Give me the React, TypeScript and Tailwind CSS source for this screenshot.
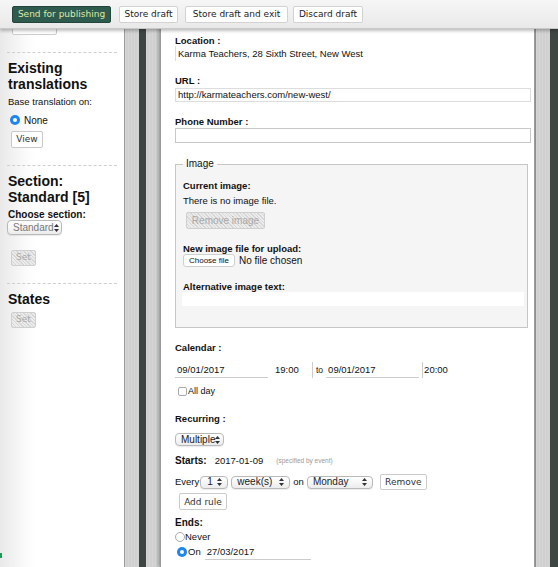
import React from 'react'

const sans = "font-['Liberation_Sans',Arial,sans-serif]"
const btnFont = "font-['DejaVu_Sans',Verdana,sans-serif] text-[9px]"
const hatch =
  'bg-[repeating-linear-gradient(45deg,#d6d6d6_0px,#d6d6d6_1px,#ececec_1px,#ececec_2.5px)] text-[#a9a9a9] border border-[#cfcfcf] rounded-[2px]'
const texture =
  'bg-[#d0d0d0] bg-[repeating-linear-gradient(90deg,rgba(255,255,255,0.12)_0px,rgba(255,255,255,0.12)_1px,transparent_1px,transparent_3px)]'

function Arrows() {
  return (
    <svg width="5" height="8" viewBox="0 0 5 8" className="shrink-0">
      <path d="M2.5 0 L5 3 L0 3 Z M2.5 8 L5 5 L0 5 Z" fill="#333" />
    </svg>
  )
}

function Select({ label, className = '', muted = false }: { label: string; className?: string; muted?: boolean }) {
  return (
    <div
      className={`flex items-center justify-between rounded-[4px] border border-[#b9b9b9] bg-[linear-gradient(#fff,#ececec)] px-[5px] text-[10px] shadow-[0_1px_1px_rgba(0,0,0,0.08)] ${
        muted ? 'text-[#777]' : 'text-[#222]'
      } ${className}`}
    >
      <span>{label}</span>
      <Arrows />
    </div>
  )
}

function Radio({ checked }: { checked?: boolean }) {
  return checked ? (
    <span className="flex h-[10px] w-[10px] shrink-0 items-center justify-center rounded-full bg-[#1d86f2]">
      <span className="h-[4px] w-[4px] rounded-full bg-white" />
    </span>
  ) : (
    <span className="h-[10px] w-[10px] shrink-0 rounded-full border border-[#aaa] bg-white" />
  )
}

function Dashed({ top }: { top: string }) {
  return <div className={`${top} mx-[7px] border-t border-dashed border-[#cfcfcf]`} />
}

function Toolbar() {
  return (
    <div className="absolute left-0 right-0 top-0 flex h-[29px] items-start border-b border-[#c8c8c8] bg-[linear-gradient(#f6f6f6,#e9e9e9)] pl-[12px] pt-[6px] shadow-[0_2px_3px_rgba(0,0,0,0.25)]">
      <button className={`${btnFont} h-[17px] w-[99px] rounded-[2px] border border-[#23463c] bg-[#2f5b4f] text-[#dfeaa6]`}>
        Send for publishing
      </button>
      <button className={`${btnFont} ml-[8px] h-[17px] w-[59px] rounded-[2px] border border-[#d2d2d2] bg-white text-[#222]`}>
        Store draft
      </button>
      <button className={`${btnFont} ml-[7px] h-[17px] w-[103px] rounded-[2px] border border-[#d2d2d2] bg-white text-[#222]`}>
        Store draft and exit
      </button>
      <button className={`${btnFont} ml-[5px] h-[17px] w-[70px] rounded-[2px] border border-[#d2d2d2] bg-white text-[#222]`}>
        Discard draft
      </button>
    </div>
  )
}

function Sidebar() {
  return (
    <aside className="flex w-[125px] shrink-0 flex-col border-r border-[#9c9c9c] bg-[linear-gradient(90deg,#e9e9e9_0px,#fafafa_25px,#fff_35px)] pt-[17px] text-[#111]">
      <button className={`${btnFont} ml-[12px] h-[18px] w-[45px] rounded-[2px] border border-[#ccc] bg-white text-[#999]`}>
        Preview
      </button>
      <Dashed top="mt-[17px]" />
      <h3 className="ml-[8px] mt-[7px] text-[14px] font-bold leading-[16px]">
        Existing
        <br />
        translations
      </h3>
      <p className="ml-[8px] mt-[4px] text-[9.5px] leading-[12px]">Base translation on:</p>
      <div className="ml-[10px] mt-[6px] flex h-[12px] items-center gap-[4px] text-[10px]">
        <Radio checked />
        <span>None</span>
      </div>
      <button className={`${btnFont} ml-[11px] mt-[5px] h-[17px] w-[32px] rounded-[2px] border border-[#c9c9c9] bg-white text-[#333]`}>
        View
      </button>
      <Dashed top="mt-[17px]" />
      <h3 className="ml-[8px] mt-[7px] text-[14px] font-bold leading-[16px]">
        Section:
        <br />
        Standard [5]
      </h3>
      <p className="ml-[8px] mt-[4px] text-[10px] font-bold leading-[12px]">Choose section:</p>
      <Select label="Standard" muted className="ml-[7px] mt-[-1px] h-[15px] w-[55px]" />
      <button className={`${btnFont} ${hatch} ml-[11px] mt-[15px] h-[16px] w-[25px]`}>Set</button>
      <Dashed top="mt-[17px]" />
      <h3 className="ml-[8px] mt-[7px] text-[14px] font-bold leading-[16px]">States</h3>
      <button className={`${btnFont} ${hatch} ml-[11px] mt-[5px] h-[16px] w-[25px]`}>Set</button>
      <div className="mb-[9px] mt-auto h-[5px] w-[2px] bg-[#1f9a55]" />
    </aside>
  )
}

function Label({ children, className = '' }: { children: React.ReactNode; className?: string }) {
  return <div className={`text-[9.5px] font-bold leading-[12px] text-[#111] ${className}`}>{children}</div>
}

function MainForm() {
  return (
    <main className="w-[375px] shrink-0 border-x border-[#9a9a9a] bg-white pl-[14px] pr-[3px] pt-[35px] text-[9.5px] leading-[12px] text-[#111] shadow-[-2px_0_3px_rgba(0,0,0,0.25)]">
      <Label className="h-[11px]">Location :</Label>
      <div className="flex h-[15px] items-center border-l border-[#ddd] pl-[2px]">
        Karma Teachers, 28 Sixth Street, New West
      </div>

      <Label className="mt-[14px]">URL :</Label>
      <div className="mt-[1px] flex h-[14px] items-center border border-[#ddd] pl-[2px]">
        http://karmateachers.com/new-west/
      </div>

      <Label className="mt-[14px]">Phone Number :</Label>
      <div className="h-[15px] border border-[#c8c8c8]" />

      <fieldset className="mr-[3px] mt-[15px] border border-[#c6c6c6] bg-[#f5f5f5] pb-[21px] pl-[7px] pr-[3px]">
        <legend className="px-[3px] text-[10px] font-medium leading-[12px]">Image</legend>
        <Label className="mt-[10px]">Current image:</Label>
        <p className="mt-[3px]">There is no image file.</p>
        <button className={`${sans} ${hatch} ml-[3px] mt-[5px] block h-[17px] w-[79px] text-[10px]`}>Remove image</button>
        <Label className="mt-[14px] h-[11px]">New image file for upload:</Label>
        <div className="flex h-[13px] items-center">
          <span className={`${sans} flex h-[13px] w-[52px] items-center justify-center rounded-[3px] border border-[#d0d0d0] bg-white text-[8px]`}>
            Choose file
          </span>
          <span className="ml-[4px] text-[10px]">No file chosen</span>
        </div>
        <Label className="mt-[14px] h-[11px]">Alternative image text:</Label>
        <div className="ml-[-1px] h-[14px] bg-white" />
      </fieldset>

      <Label className="mt-[14px]">Calendar :</Label>
      <div className="mt-[8px] flex h-[16px] items-stretch">
        <span className="flex w-[93px] items-center border-b border-[#ccc] pl-[2px]">09/01/2017</span>
        <span className="flex w-[44px] items-center pl-[7px]">19:00</span>
        <span className="flex items-center border-l border-[#ccc] pl-[3px] pr-[3px] text-[8.5px]">to</span>
        <span className="flex w-[93px] items-center border-b border-[#ccc] pl-[2px]">09/01/2017</span>
        <span className="ml-[3px] flex items-center border-l border-[#ccc] pl-[1px]">20:00</span>
      </div>
      <div className="ml-[3px] mt-[7px] flex h-[12px] items-center gap-[1px] text-[9px]">
        <span className="h-[9px] w-[9px] rounded-[2px] border border-[#aaa] bg-white" />
        <span>All day</span>
      </div>

      <Label className="mt-[16px]">Recurring :</Label>
      <Select label="Multiple" className="mt-[8px] h-[13px] w-[49px]" />

      <div className="mt-[9px] flex h-[12px] items-center">
        <span className="text-[10px] font-bold">Starts:</span>
        <span className="ml-[8px]">2017-01-09</span>
        <span className="ml-[13px] text-[6.5px] text-[#999]">(specified by event)</span>
      </div>

      <div className="mt-[7px] flex h-[16px] items-center">
        <span>Every</span>
        <Select label="1" className="ml-[1px] h-[13px] w-[28px] pl-[6px]" />
        <Select label="week(s)" className="ml-[3px] h-[13px] w-[59px] pl-[5px]" />
        <span className="ml-[3px]">on</span>
        <Select label="Monday" className="ml-[3px] h-[13px] w-[66px]" />
        <button className={`${btnFont} ml-[7px] h-[16px] w-[47px] rounded-[2px] border border-[#ccc] bg-white text-[#333]`}>
          Remove
        </button>
      </div>
      <button className={`${btnFont} ml-[4px] mt-[3px] block h-[17px] w-[48px] rounded-[2px] border border-[#ccc] bg-white text-[#333]`}>
        Add rule
      </button>

      <Label className="mt-[7px] text-[10px]">Ends:</Label>
      <div className="mt-[2px] flex h-[12px] items-center">
        <Radio />
        <span>Never</span>
      </div>
      <div className="mt-[2px] flex h-[14px] items-center">
        <span className="ml-[2px]">
          <Radio checked />
        </span>
        <span className="ml-[1px]">On</span>
        <span className="ml-[4px] flex h-[15px] w-[106px] items-center border-b border-[#ccc] pl-[2px]">27/03/2017</span>
      </div>
    </main>
  )
}

export default function App() {
  return (
    <div className={`${sans} relative flex h-[567px] w-[558px] overflow-hidden bg-white`}>
      <Sidebar />
      <div className={`w-[14px] shrink-0 ${texture}`} />
      <div className="w-[7px] shrink-0 bg-[#3e4644]" />
      <div className={`w-[14px] shrink-0 ${texture}`} />
      <MainForm />
      <div className={`w-[15px] shrink-0 border-l border-[#8f8f8f] ${texture}`} />
      <div className="flex-1 bg-[#3e4644]" />
      <Toolbar />
    </div>
  )
}
